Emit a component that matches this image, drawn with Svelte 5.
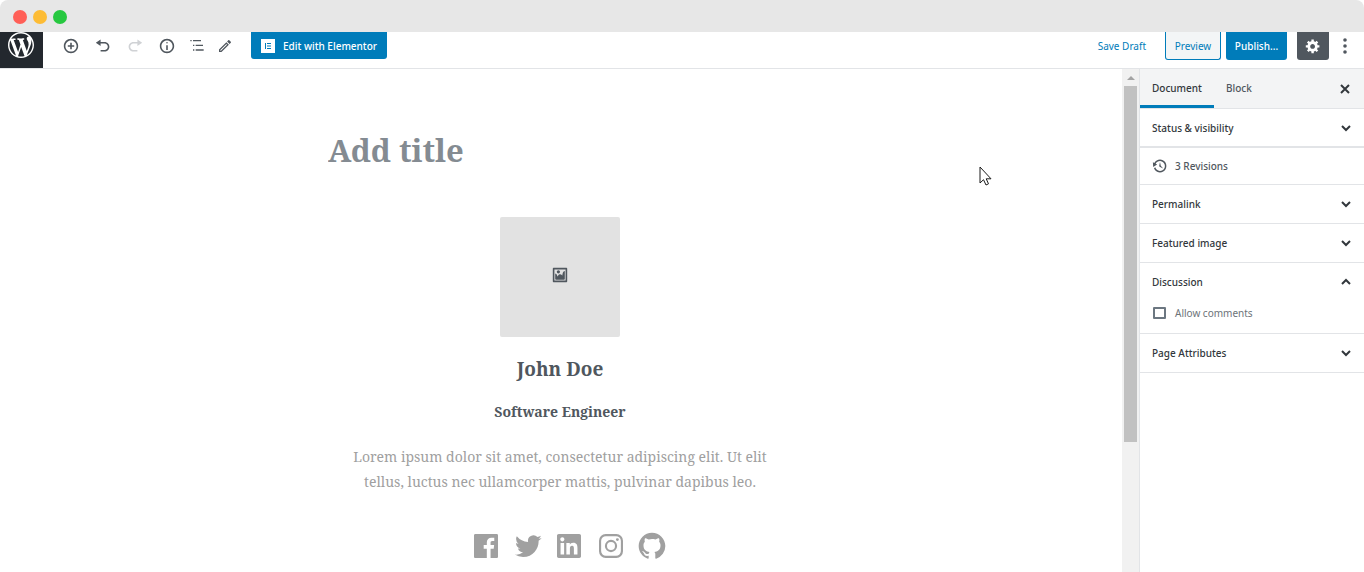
<script lang="ts">
  interface Icon {
    name: string;
    box?: number;
    path: string;
    disabled?: boolean;
  }

  const tools: Icon[] = [
    {
      name: 'Add block',
      path: 'M10 1c-5 0-9 4-9 9s4 9 9 9 9-4 9-9-4-9-9-9zm0 16c-3.9 0-7-3.1-7-7s3.1-7 7-7 7 3.1 7 7-3.1 7-7 7zm1-11H9v3H6v2h3v3h2v-3h3V9h-3V6z'
    },
    {
      name: 'Undo',
      path: 'M12 5H7V2L1 6l6 4V7h5c2.2 0 4 1.8 4 4s-1.8 4-4 4H7v2h5c3.3 0 6-2.7 6-6s-2.7-6-6-6z'
    },
    {
      name: 'Redo',
      disabled: true,
      path: 'M8 5h5V2l6 4-6 4V7H8c-2.2 0-4 1.8-4 4s1.8 4 4 4h5v2H8c-3.3 0-6-2.7-6-6s2.7-6 6-6z'
    },
    {
      name: 'Content structure',
      path: 'M9 15h2V9H9v6zm1-10c-.5 0-1 .5-1 1s.5 1 1 1 1-.5 1-1-.5-1-1-1zm0-4c-5 0-9 4-9 9s4 9 9 9 9-4 9-9-4-9-9-9zm0 16c-3.9 0-7-3.1-7-7s3.1-7 7-7 7 3.1 7 7-3.1 7-7 7z'
    },
    {
      name: 'Block navigation',
      box: 24,
      path: 'M2 3h2v2H2zM6 3h12v2H6zM6 10h2v2H6zM10 10h11v2H10zM6 17h2v2H6zM10 17h12v2H10z'
    },
    {
      name: 'Edit',
      box: 24,
      path: 'M14.06 9.02l.92.92L5.92 19H5v-.92l9.06-9.06M17.66 3c-.25 0-.51.1-.7.29l-1.83 1.83 3.75 3.75 1.83-1.83c.39-.39.39-1.02 0-1.41l-2.34-2.34c-.2-.2-.45-.29-.71-.29zm-3.6 3.19L3 17.25V21h3.75L17.81 9.94l-3.75-3.75z'
    }
  ];

  const socials: Icon[] = [
    {
      name: 'Facebook',
      path: 'M20.007 3H3.993C3.445 3 3 3.445 3 3.993v16.013c0 .55.445.994.993.994h8.621v-6.971h-2.346v-2.717h2.346V9.31c0-2.325 1.42-3.591 3.494-3.591.993 0 1.847.074 2.096.107v2.43l-1.438.001c-1.128 0-1.346.536-1.346 1.323v1.734h2.69l-.35 2.717h-2.34V21h4.587c.548 0 .993-.445.993-.993V3.993A.993.993 0 0 0 20.007 3z'
    },
    {
      name: 'Twitter',
      path: 'M22.23 5.924a8.212 8.212 0 0 1-2.357.646 4.115 4.115 0 0 0 1.804-2.27 8.221 8.221 0 0 1-2.606.996 4.103 4.103 0 0 0-6.991 3.742 11.647 11.647 0 0 1-8.457-4.287 4.087 4.087 0 0 0-.556 2.063 4.1 4.1 0 0 0 1.825 3.415 4.09 4.09 0 0 1-1.859-.513v.052a4.104 4.104 0 0 0 3.292 4.023 4.099 4.099 0 0 1-1.853.07 4.11 4.11 0 0 0 3.833 2.85A8.236 8.236 0 0 1 2 18.411a11.616 11.616 0 0 0 6.29 1.843c7.547 0 11.675-6.252 11.675-11.675 0-.178-.004-.355-.012-.531a8.298 8.298 0 0 0 2.277-2.124z'
    },
    {
      name: 'LinkedIn',
      path: 'M19.7 3H4.3C3.582 3 3 3.582 3 4.3v15.4c0 .718.582 1.3 1.3 1.3h15.4c.718 0 1.3-.582 1.3-1.3V4.3c0-.718-.582-1.3-1.3-1.3zM8.339 18.338H5.667v-8.59h2.672v8.59zM7.004 8.574c-.857 0-1.549-.694-1.549-1.548 0-.855.691-1.548 1.549-1.548.854 0 1.547.694 1.547 1.548 0 .855-.692 1.548-1.547 1.548zm11.335 9.764H15.67v-4.177c0-.996-.017-2.278-1.387-2.278-1.389 0-1.601 1.086-1.601 2.206v4.249h-2.667v-8.59h2.559v1.174h.037c.356-.675 1.227-1.387 2.526-1.387 2.703 0 3.203 1.779 3.203 4.092v4.711z'
    },
    {
      name: 'Instagram',
      path: 'M8 3h8a5 5 0 0 1 5 5v8a5 5 0 0 1-5 5H8a5 5 0 0 1-5-5V8a5 5 0 0 1 5-5zm.2 1.6a3.6 3.6 0 0 0-3.6 3.6v7.6a3.6 3.6 0 0 0 3.6 3.6h7.6a3.6 3.6 0 0 0 3.6-3.6V8.2a3.6 3.6 0 0 0-3.6-3.6zM12 7.4a4.6 4.6 0 1 1 0 9.2 4.6 4.6 0 0 1 0-9.2zm0 1.6a3 3 0 1 0 0 6 3 3 0 0 0 0-6zm4.800-2.900a1.100 1.100 0 1 1 0 2.200 1.100 1.100 0 0 1 0-2.200z'
    },
    {
      name: 'GitHub',
      path: 'M12 2C6.477 2 2 6.477 2 12c0 4.419 2.865 8.166 6.839 9.489.5.09.682-.218.682-.484 0-.236-.009-.866-.014-1.699-2.782.602-3.369-1.34-3.369-1.34-.455-1.157-1.11-1.465-1.11-1.465-.909-.62.069-.608.069-.608 1.004.071 1.532 1.03 1.532 1.03.891 1.529 2.341 1.089 2.91.833.091-.647.349-1.086.635-1.337-2.22-.251-4.555-1.111-4.555-4.943 0-1.091.39-1.984 1.03-2.682-.103-.254-.447-1.27.097-2.646 0 0 .84-.269 2.75 1.025A9.548 9.548 0 0 1 12 6.836c.85.004 1.705.114 2.504.336 1.909-1.294 2.748-1.025 2.748-1.025.546 1.376.202 2.394.1 2.646.64.699 1.026 1.591 1.026 2.682 0 3.841-2.337 4.687-4.565 4.935.359.307.679.917.679 1.852 0 1.335-.012 2.415-.012 2.741 0 .269.18.579.688.481A9.997 9.997 0 0 0 22 12c0-5.523-4.477-10-10-10z'
    }
  ];

  let title = $state('');
  let tab = $state('Document');
  let allowComments = $state(false);
  let open = $state<Record<string, boolean>>({ Discussion: true });
</script>

{#snippet panelHeader(name: string)}
  <button class="panel-toggle" aria-expanded={!!open[name]} onclick={() => (open[name] = !open[name])}>
    {name}
    <svg width="12" height="12" viewBox="0 0 12 12" aria-hidden="true">
      <path d={open[name] ? 'M2 8l4-4 4 4' : 'M2 4l4 4 4-4'} />
    </svg>
  </button>
{/snippet}

<div class="window">
  <div class="titlebar">
    <span class="dot red"></span>
    <span class="dot yellow"></span>
    <span class="dot green"></span>
  </div>

  <header class="toolbar">
    <a class="wp-logo" href="#dashboard" aria-label="View pages">
      <svg width="26" height="26" viewBox="0 0 20 20" aria-hidden="true">
        <path d="M20 10c0-5.51-4.49-10-10-10C4.48 0 0 4.49 0 10c0 5.52 4.48 10 10 10 5.51 0 10-4.48 10-10zM7.78 15.37L4.37 6.22c.55-.02 1.17-.08 1.17-.08.5-.06.44-1.13-.06-1.11 0 0-1.45.11-2.37.11-.18 0-.37 0-.58-.01C4.12 2.69 6.87 1.11 10 1.11c2.33 0 4.45.87 6.05 2.34-.68-.11-1.65.39-1.65 1.58 0 .74.45 1.36.9 2.1.35.61.55 1.36.55 2.46 0 1.49-1.4 5-1.4 5l-3.03-8.37c.54-.02.82-.17.82-.17.5-.05.44-1.25-.06-1.22 0 0-1.44.12-2.38.12-.87 0-2.33-.12-2.33-.12-.5-.03-.56 1.2-.06 1.22l.92.08 1.26 3.41zM17.41 10c.24-.64.74-1.87.43-4.25.7 1.29 1.05 2.71 1.05 4.25 0 3.29-1.73 6.24-4.4 7.78.97-2.59 1.94-5.2 2.92-7.78zM6.1 18.09C3.12 16.65 1.11 13.53 1.11 10c0-1.3.23-2.48.72-3.59C3.25 10.3 4.67 14.2 6.1 18.09zm4.03-6.63l2.58 6.98c-.86.29-1.76.45-2.71.45-.79 0-1.57-.11-2.29-.33.81-2.38 1.62-4.74 2.42-7.1z" />
      </svg>
    </a>

    <div class="tools">
      {#each tools as tool}
        <button class="tool" class:compact={tool.box === 24} aria-label={tool.name} disabled={tool.disabled}>
          <svg width="16" height="16" viewBox="0 0 {tool.box ?? 20} {tool.box ?? 20}">
            <path d={tool.path} />
          </svg>
        </button>
      {/each}
    </div>

    <button class="elementor">
      <svg width="14" height="14" viewBox="0 0 14 14" aria-hidden="true">
        <rect width="14" height="14" fill="#fff" />
        <path d="M4 4h1v6H4zM6 4h4v1H6zM6 6.5h4v1H6zM6 9h4v1H6z" fill="#007cba" />
      </svg>
      Edit with Elementor
    </button>

    <div class="actions">
      <button class="save">Save Draft</button>
      <button class="preview">Preview</button>
      <button class="publish">Publish...</button>
      <button class="settings" aria-label="Settings">
        <svg width="16" height="16" viewBox="0 0 20 20">
          <path d="M18 12h-2.18c-.17.7-.44 1.35-.81 1.93l1.54 1.54-2.1 2.1-1.54-1.54c-.58.36-1.23.63-1.91.79V19H8v-2.18c-.68-.16-1.33-.43-1.91-.79l-1.54 1.54-2.12-2.12 1.54-1.54c-.36-.58-.63-1.23-.79-1.91H1V9.03h2.17c.16-.7.44-1.35.8-1.94L2.43 5.55l2.1-2.1 1.54 1.54c.58-.37 1.24-.64 1.93-.81V2h3v2.18c.68.16 1.33.43 1.91.79l1.54-1.54 2.12 2.12-1.54 1.54c.36.59.64 1.24.8 1.94H18V12zm-8.5 1.5c1.66 0 3-1.34 3-3s-1.34-3-3-3-3 1.34-3 3 1.34 3 3 3z" />
        </svg>
      </button>
      <button class="more" aria-label="More options">
        <svg width="6" height="16" viewBox="0 0 6 16">
          <circle cx="3" cy="2" r="1.8" />
          <circle cx="3" cy="8" r="1.8" />
          <circle cx="3" cy="14" r="1.8" />
        </svg>
      </button>
    </div>
  </header>

  <div class="body">
    <main class="canvas">
      <div class="content">
        <input class="post-title" aria-label="Title" placeholder="Add title" bind:value={title} />

        <section class="profile">
          <button class="avatar" aria-label="Upload picture">
            <svg width="16" height="16" viewBox="0 0 20 20">
              <path d="M2.25 1h15.5c.69 0 1.25.56 1.25 1.25v15.5c0 .69-.56 1.25-1.25 1.25H2.25C1.56 19 1 18.44 1 17.75V2.25C1 1.56 1.56 1 2.25 1zM17 17V3H3v14h14zM10 6c0-1.1-.9-2-2-2s-2 .9-2 2 .9 2 2 2 2-.9 2-2zm3 5s0-6 3-6v10c0 .55-.45 1-1 1H5c-.55 0-1-.45-1-1V8c2 0 3 4 3 4s1-3 3-3 3 2 3 2z" />
            </svg>
          </button>
          <h2>John Doe</h2>
          <h3>Software Engineer</h3>
          <p>Lorem ipsum dolor sit amet, consectetur adipiscing elit. Ut elit tellus, luctus nec ullamcorper mattis, pulvinar dapibus leo.</p>
          <div class="socials">
            {#each socials as social}
              <a href="#{social.name.toLowerCase()}" aria-label={social.name}>
                <svg width="32" height="32" viewBox="0 0 24 24">
                  <path d={social.path} fill-rule="evenodd" />
                </svg>
              </a>
            {/each}
          </div>
        </section>
      </div>
    </main>

    <div class="scrollbar" aria-hidden="true">
      <span class="arrow"></span>
      <span class="thumb"></span>
    </div>

    <aside class="sidebar">
      <div class="tabs">
        {#each ['Document', 'Block'] as name}
          <button class="tab" class:active={tab === name} onclick={() => (tab = name)}>{name}</button>
        {/each}
        <button class="close" aria-label="Close settings">
          <svg width="10" height="10" viewBox="0 0 10 10"><path d="M1 1l8 8M9 1L1 9" /></svg>
        </button>
      </div>

      <div class="panel status">{@render panelHeader('Status & visibility')}</div>
      <div class="panel">
        <a class="revisions" href="#revisions">
          <svg width="16" height="16" viewBox="0 0 20 20" aria-hidden="true">
            <path d="M13.65 2.88c3.93 2.01 5.48 6.84 3.47 10.77s-6.83 5.48-10.77 3.47c-1.87-.96-3.2-2.56-3.86-4.4l1.64-1.03c.45 1.57 1.52 2.95 3.08 3.76 3.01 1.54 6.69.35 8.23-2.66 1.55-3.01.36-6.69-2.65-8.24C9.78 3.01 6.1 4.2 4.56 7.21l1.88.97-4.95 3.08-.39-5.82 1.78.91C4.9 2.4 9.75.89 13.65 2.88zm-4.36 7.83C9.11 10.53 9 10.28 9 10c0-.07.03-.12.04-.19h-.01L10 5l.97 4.81L14 13l-4.5-2.12.02-.02c-.08-.04-.16-.09-.23-.15z" />
          </svg>
          3 Revisions
        </a>
      </div>
      <div class="panel">{@render panelHeader('Permalink')}</div>
      <div class="panel">{@render panelHeader('Featured image')}</div>
      <div class="panel">
        {@render panelHeader('Discussion')}
        {#if open.Discussion}
          <label class="comments">
            <input type="checkbox" bind:checked={allowComments} />
            Allow comments
          </label>
        {/if}
      </div>
      <div class="panel">{@render panelHeader('Page Attributes')}</div>
    </aside>
  </div>

  <svg class="cursor" width="13" height="20" viewBox="0 0 13 20" aria-hidden="true">
    <path d="M1 1v16l3.5-3.3L7 19l2.5-1.2-2.3-5H12z" />
  </svg>
</div>

<style>
  :global(body) {
    margin: 0;
    background: #fff;
  }

  .window {
    position: relative;
    display: flex;
    flex-direction: column;
    min-height: 100vh;
    border-radius: 8px;
    overflow: hidden;
    background: #fff;
    color: #50575e;
    font-family: 'Noto Sans', 'Open Sans', sans-serif;
    font-size: 10px;
  }

  button {
    margin: 0;
    padding: 0;
    border: none;
    background: none;
    color: inherit;
    font: inherit;
    cursor: pointer;
  }

  a {
    color: inherit;
    text-decoration: none;
  }

  svg {
    display: block;
    fill: currentColor;
  }

  .titlebar {
    display: flex;
    align-items: center;
    gap: 6px;
    box-sizing: border-box;
    height: 32px;
    padding: 2px 13px 0;
    background: #e7e7e7;
  }

  .dot {
    width: 14px;
    height: 14px;
    border-radius: 50%;
  }

  .red {
    background: #ff5f57;
  }

  .yellow {
    background: #fdbc35;
  }

  .green {
    background: #27c840;
  }

  .toolbar {
    display: flex;
    align-items: flex-start;
    height: 36px;
    border-bottom: 1px solid #e2e4e7;
  }

  .wp-logo {
    box-sizing: border-box;
    width: 43px;
    height: 36px;
    padding: 0 8px;
    background: #23282e;
    color: #fff;
  }

  .tools {
    display: flex;
    gap: 8px;
    padding-left: 16px;
  }

  .tool {
    display: grid;
    place-items: center;
    width: 24px;
    height: 27px;
  }

  .tool.compact {
    width: 20px;
  }

  .tool:disabled {
    color: #d0d2d5;
  }

  .elementor {
    display: flex;
    align-items: center;
    gap: 8px;
    height: 27px;
    margin-left: 16px;
    padding: 0 10px;
    border-radius: 0 0 3px 3px;
    background: #007cba;
    color: #fff;
    font-weight: 500;
  }

  .actions {
    display: flex;
    margin-left: auto;
    padding-right: 11px;
  }

  .actions button {
    height: 28px;
    border-radius: 0 0 3px 3px;
  }

  .save {
    margin-right: 19px;
    color: #007cba;
  }

  .actions .preview {
    box-sizing: border-box;
    width: 56px;
    margin-right: 5px;
    border: 1px solid #007cba;
    border-top: none;
    background: #f3f5f6;
    color: #007cba;
  }

  .publish {
    width: 61px;
    margin-right: 10px;
    background: #007cba;
    color: #fff;
    font-weight: 500;
  }

  .settings,
  .more {
    display: grid;
    place-items: center;
  }

  .settings {
    width: 32px;
    background: #50575e;
    color: #fff;
  }

  .more {
    width: 16px;
    margin-left: 8px;
  }

  .body {
    display: flex;
    flex: 1;
  }

  .canvas {
    flex: 1;
    padding-right: 2px;
    font-family: 'Noto Serif', 'DejaVu Serif', serif;
  }

  .content {
    max-width: 464px;
    margin: 0 auto;
    padding-top: 57px;
  }

  .post-title {
    display: block;
    box-sizing: border-box;
    width: 100%;
    height: 48px;
    padding: 0;
    border: none;
    outline: none;
    color: #50575e;
    font: bold 31px 'Noto Serif', 'DejaVu Serif', serif;
  }

  .post-title::placeholder {
    color: #848b92;
    opacity: 1;
  }

  .profile {
    display: flex;
    flex-direction: column;
    align-items: center;
    padding: 43px 12px 9px;
    text-align: center;
  }

  .avatar {
    display: grid;
    place-items: center;
    width: 120px;
    height: 120px;
    border-radius: 2px;
    background: #e2e2e2;
  }

  .avatar svg {
    margin-bottom: 4px;
  }

  h2 {
    margin: 18px 0 0;
    font-size: 19px;
    line-height: 28px;
  }

  h3 {
    margin: 18px 0 0;
    font-size: 14px;
    line-height: 22px;
  }

  p {
    margin: 21px 0 0;
    color: #a0a0a0;
    font-size: 14px;
    line-height: 25px;
  }

  .socials {
    display: flex;
    justify-content: space-between;
    width: 198px;
    margin-top: 36px;
    padding-left: 18px;
    color: #a0a0a0;
  }

  .scrollbar {
    display: flex;
    flex-direction: column;
    align-items: center;
    width: 17px;
    background: #f1f1f1;
  }

  .arrow {
    margin: 7px 0 6px;
    border: 4px solid transparent;
    border-top: none;
    border-bottom-color: #a3a3a3;
  }

  .thumb {
    width: 13px;
    height: 356px;
    background: #c1c1c1;
  }

  .sidebar {
    width: 224px;
    border-left: 1px solid #e2e4e7;
  }

  .tabs {
    display: flex;
    height: 39px;
    border-bottom: 1px solid #e2e4e7;
    background: #f3f4f5;
  }

  .tab {
    padding: 2px 12px 0;
    border-bottom: 3px solid transparent;
    font-weight: 500;
  }

  .tab.active {
    border-bottom-color: #007cba;
    color: #32373c;
  }

  .close {
    margin-left: auto;
    padding: 0 14px;
  }

  .close svg,
  .panel-toggle svg {
    fill: none;
    stroke: #32373c;
    stroke-width: 2;
  }

  .panel {
    border-bottom: 1px solid #e2e4e7;
  }

  .panel.status {
    border-bottom-width: 2px;
  }

  .panel-toggle {
    display: flex;
    align-items: center;
    justify-content: space-between;
    width: 100%;
    height: 38px;
    padding: 0 12px;
    color: #32373c;
    font-weight: 500;
  }

  .status .panel-toggle {
    height: 37px;
  }

  .revisions {
    display: flex;
    align-items: center;
    gap: 7px;
    height: 36px;
    padding: 0 12px;
    font-weight: 500;
  }

  .comments {
    display: flex;
    align-items: center;
    gap: 9px;
    height: 24px;
    padding: 0 13px 8px;
    color: #6c7379;
  }

  .comments input {
    appearance: none;
    box-sizing: border-box;
    width: 13px;
    height: 12px;
    margin: 0;
    border: 2px solid #6c7781;
    border-radius: 1px;
  }

  .comments input:checked {
    background: #007cba;
  }

  .cursor {
    position: absolute;
    left: 979px;
    top: 166px;
    fill: #fff;
    stroke: #1b1b1b;
    stroke-width: 1;
  }
</style>
